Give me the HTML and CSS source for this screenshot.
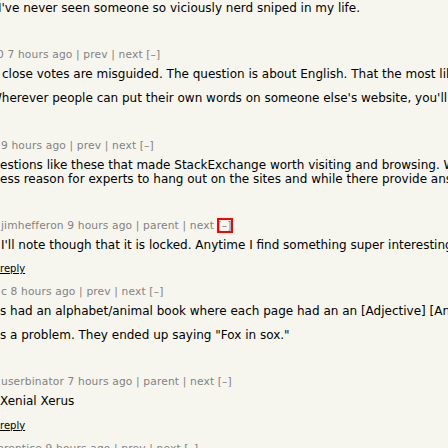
FILE: index.html
```html
<!DOCTYPE html>
<html lang="en">
<head>
<meta charset="utf-8">
<title>Comments</title>
<link rel="stylesheet" href="styles.css">
</head>
<body>
<div class="thread">

  <div class="comment">
    <div class="commtext">
      <p><span class="cut-i">I've never seen someone so viciously nerd sniped in my life.</span></p>
    </div>
    <div class="reply off"><a href="#">reply</a></div>
  </div>

  <div class="comment">
    <div class="comhead"><span class="cut-0"><a href="#">0</a> <a href="#">7 hours ago</a> | <a href="#">prev</a> | <a href="#">next</a> <a href="#" class="togg">[–]</a></span></div>
    <div class="commtext">
      <p><span class="lead-2">close votes are misguided. The question is about English. That the most likely place to find</span></p>
      <p><span class="cut-w">Wherever people can put their own words on someone else's website, you'll find</span></p>
    </div>
    <div class="reply off"><a href="#">reply</a></div>
  </div>

  <div class="comment">
    <div class="comhead"><span class="lead-1"><a href="#">9 hours ago</a> | <a href="#">prev</a> | <a href="#">next</a> <a href="#" class="togg">[–]</a></span></div>
    <div class="commtext">
      <p><span class="lead-0">estions like these that made StackExchange worth visiting and browsing. Without them</span><br><span class="lead-0">ess reason for experts to hang out on the sites and while there provide answers</span></p>
    </div>
    <div class="reply off"><a href="#">reply</a></div>
  </div>

  <div class="comment">
    <div class="comhead"><span class="lead-1"><a href="#">jimhefferon</a> <a href="#">9 hours ago</a> | <a href="#">parent</a> | <a href="#">next</a> <a href="#" class="togg focus">[–]</a></span></div>
    <div class="commtext">
      <p><span class="lead-1">I'll note though that it is locked. Anytime I find something super interesting</span></p>
    </div>
    <div class="reply"><a href="#">reply</a></div>
  </div>

  <div class="comment">
    <div class="comhead"><span class="lead-1"><a href="#">c</a> <a href="#">8 hours ago</a> | <a href="#">prev</a> | <a href="#">next</a> <a href="#" class="togg">[–]</a></span></div>
    <div class="commtext">
      <p><span class="lead-0">s had an alphabet/animal book where each page had an an [Adjective] [Animal]</span></p>
      <p><span class="lead-0">s a problem. They ended up saying "Fox in sox."</span></p>
    </div>
    <div class="reply off"><a href="#">reply</a></div>
  </div>

  <div class="comment">
    <div class="comhead"><span class="lead-1"><a href="#">userbinator</a> <a href="#">7 hours ago</a> | <a href="#">parent</a> | <a href="#">next</a> <a href="#" class="togg">[–]</a></span></div>
    <div class="commtext">
      <p><span class="lead-0">Xenial Xerus</span></p>
    </div>
    <div class="reply"><a href="#">reply</a></div>
  </div>

  <div class="comment">
    <div class="comhead"><span class="cut-p"><a href="#">prentice</a> <a href="#">9 hours ago</a> | <a href="#">prev</a> | <a href="#">next</a> <a href="#" class="togg">[–]</a></span></div>
    <div class="commtext">
      <p><span class="lead-0">&nbsp;</span></p>
    </div>
  </div>

</div>
</body>
</html>
```

FILE: styles.css
```css
html, body {
  margin: 0;
  padding: 0;
}

body {
  background: #f6f6ef;
  color: #000;
  font-family: "DejaVu Sans", Verdana, sans-serif;
  overflow: hidden;
  width: 448px;
  height: 448px;
}

.thread {
  padding-top: 1px;
}

.comhead {
  font-size: 10.67px;
  line-height: 13px;
  letter-spacing: 0.15px;
  color: #828282;
  white-space: nowrap;
  margin-bottom: 6px;
}

.comhead a {
  color: #828282;
  text-decoration: none;
}

.togg.focus {
  outline: 2px solid #f00;
  outline-offset: -1px;
}

.commtext {
  font-size: 12px;
  line-height: 14px;
  white-space: nowrap;
}

.commtext p {
  margin: 0;
}

.commtext p + p {
  margin-top: 10px;
}

.reply {
  font-size: 10px;
  line-height: 12px;
  margin: 11.5px 0 9.75px;
}

.reply a {
  color: #000;
  text-decoration: underline;
}

.reply.off a {
  margin-left: -80px;
}

.cut-i { margin-left: -2px; }
.cut-0 { margin-left: -3px; }
.cut-w { margin-left: -10px; }
.cut-p { margin-left: -3px; }
.lead-0 { margin-left: 0; }
.lead-1 { margin-left: 1px; }
.lead-2 { margin-left: 2px; }
```
